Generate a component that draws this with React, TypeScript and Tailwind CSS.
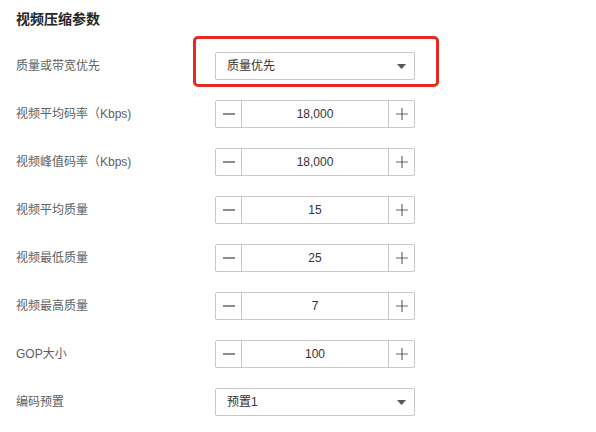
import React from 'react';

const FONT = "font-['Liberation_Sans','Noto_Sans_CJK_SC',sans-serif]";

function Caret() {
  return (
    <svg width="9" height="5" viewBox="0 0 9 5" className="shrink-0">
      <path d="M0 0 H9 L4.5 5 Z" fill="#555" />
    </svg>
  );
}

function Select({ value }: { value: string }) {
  return (
    <div className="flex h-[28px] w-[200px] items-center justify-between rounded-[2px] border border-[#c8c8c8] bg-white pl-[11px] pr-[8px] text-[12px] text-[#333]">
      <span>{value}</span>
      <Caret />
    </div>
  );
}

function Stepper({ value }: { value: string }) {
  return (
    <div className="flex h-[28px] w-[200px] rounded-[2px] border border-[#c8c8c8] bg-white text-[12px] text-[#333]">
      <div className="flex w-[26px] items-center justify-center border-r border-[#c8c8c8]">
        <svg width="12" height="12" viewBox="0 0 12 12">
          <path d="M0 6 H12" stroke="#666" strokeWidth="1.5" />
        </svg>
      </div>
      <div className="flex flex-1 items-center justify-center">{value}</div>
      <div className="flex w-[26px] items-center justify-center border-l border-[#c8c8c8]">
        <svg width="12" height="12" viewBox="0 0 12 12">
          <path d="M0 6 H12 M6 0 V12" stroke="#666" strokeWidth="1.2" />
        </svg>
      </div>
    </div>
  );
}

function Row({ label, children }: { label: string; children: React.ReactNode }) {
  return (
    <div className="flex h-[28px] items-center">
      <div className="w-[199px] text-[12px] text-[#606060]">{label}</div>
      {children}
    </div>
  );
}

const steppers = [
  { label: '视频平均码率（Kbps)', value: '18,000' },
  { label: '视频峰值码率（Kbps)', value: '18,000' },
  { label: '视频平均质量', value: '15' },
  { label: '视频最低质量', value: '25' },
  { label: '视频最高质量', value: '7' },
  { label: 'GOP大小', value: '100' },
];

export default function App() {
  return (
    <div className={`${FONT} h-[432px] w-[596px] bg-white pl-4 pt-[10px]`}>
      <div className="h-[18px] text-[14px] font-bold leading-[18px] text-[#252525]">视频压缩参数</div>

      <div className="mt-[24px] flex flex-col gap-[20px]">
        <Row label="质量或带宽优先">
          <div className="relative">
            {/* red highlight annotation */}
            <div className="pointer-events-none absolute -left-[22px] -right-[24px] -top-[16px] -bottom-[7px] rounded-[5px] border-[3px] border-[#e42a22]" />
            <Select value="质量优先" />
          </div>
        </Row>

        {steppers.map(s => (
          <Row key={s.label} label={s.label}>
            <Stepper value={s.value} />
          </Row>
        ))}

        <Row label="编码预置">
          <Select value="预置1" />
        </Row>
      </div>
    </div>
  );
}
